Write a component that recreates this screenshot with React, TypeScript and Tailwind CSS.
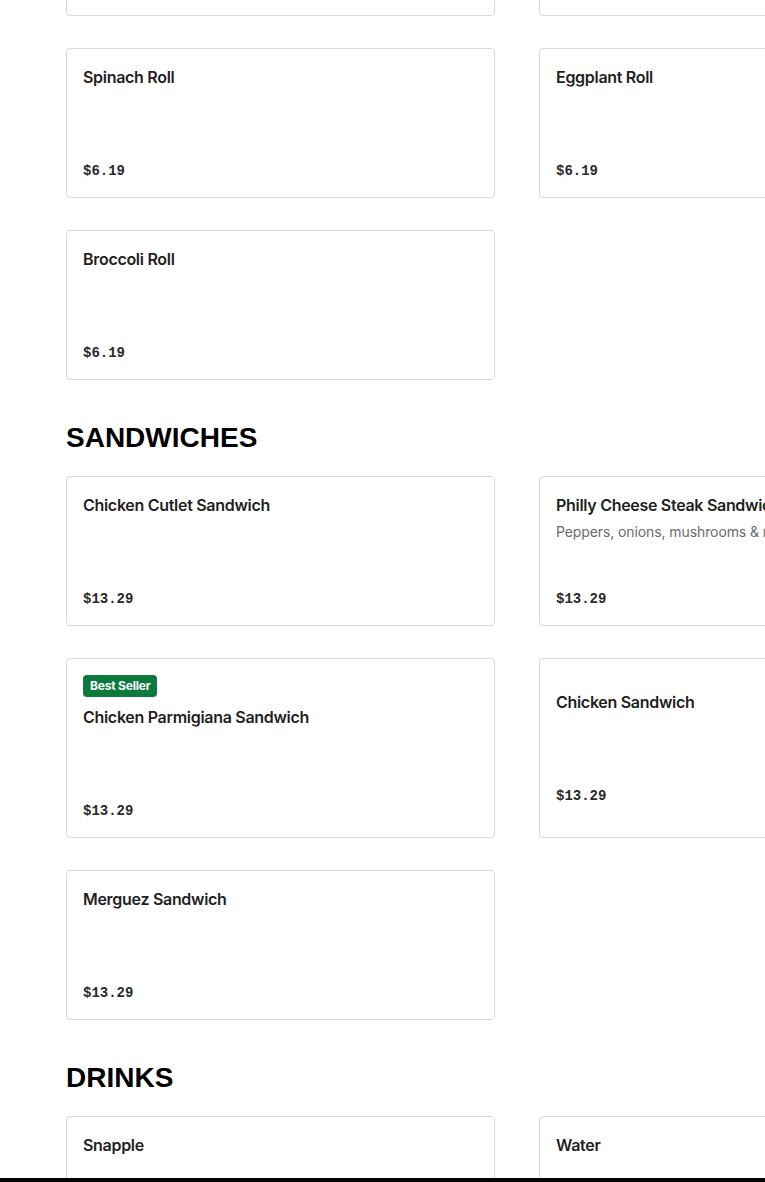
type Item = {
  name: string;
  price?: string;
  description?: string;
  badge?: string;
};

type Section = {
  title?: string;
  items: Item[];
};

const sections: Section[] = [
  {
    items: [
      { name: "Cabbage Roll", price: "$6.19" },
      { name: "Potato Roll", price: "$6.19" },
      { name: "Spinach Roll", price: "$6.19" },
      { name: "Eggplant Roll", price: "$6.19" },
      { name: "Broccoli Roll", price: "$6.19" },
    ],
  },
  {
    title: "SANDWICHES",
    items: [
      { name: "Chicken Cutlet Sandwich", price: "$13.29" },
      {
        name: "Philly Cheese Steak Sandwich",
        description: "Peppers, onions, mushrooms & melted cheese",
        price: "$13.29",
      },
      { name: "Chicken Parmigiana Sandwich", price: "$13.29", badge: "Best Seller" },
      { name: "Chicken Sandwich", price: "$13.29" },
      { name: "Merguez Sandwich", price: "$13.29" },
    ],
  },
  {
    title: "DRINKS",
    items: [
      { name: "Snapple", price: "$3.29" },
      { name: "Water", price: "$2.19" },
    ],
  },
];

function MenuCard({ item }: { item: Item }) {
  return (
    <div className="flex flex-col justify-center rounded-[4px] border border-[#d9d9d9] bg-white p-4">
      {item.badge && (
        <div className="mb-2 flex">
          <span className="flex h-[22px] items-center rounded-[4px] bg-[#0b7a3c] px-[7px] text-[12px] font-bold tracking-[-0.2px] text-white">
            {item.badge}
          </span>
        </div>
      )}
      <div className="flex min-h-[116px] flex-col">
        <h3 className="whitespace-nowrap text-[16px] font-semibold leading-6 tracking-[-0.3px] text-[#1f1f1f]">
          {item.name}
        </h3>
        {item.description && (
          <p className="mt-[5px] whitespace-nowrap text-[14px] leading-5 tracking-[-0.1px] text-[#6b6b6b]">
            {item.description}
          </p>
        )}
        <span className="mt-auto font-['Liberation_Mono',monospace] text-[14px] font-bold leading-5 text-[#2a2a2a]">
          {item.price}
        </span>
      </div>
    </div>
  );
}

export default function App() {
  return (
    <div className="min-h-screen overflow-hidden bg-white font-['Inter',sans-serif]">
      <div className="-mt-[134px] pl-[66px]">
        {sections.map((section, i) => (
          <div key={i} className={i > 0 ? "mt-10" : ""}>
            {section.title && (
              <h2 className="mb-5 font-['Liberation_Sans',sans-serif] text-[28px] font-black leading-9 text-black">
                {section.title}
              </h2>
            )}
            <div className="grid w-[902px] grid-cols-[429px_429px] gap-x-[44px] gap-y-8">
              {section.items.map((item) => (
                <MenuCard key={item.name} item={item} />
              ))}
            </div>
          </div>
        ))}
      </div>
      <div className="fixed bottom-0 left-0 h-1 w-full bg-black" />
    </div>
  );
}
